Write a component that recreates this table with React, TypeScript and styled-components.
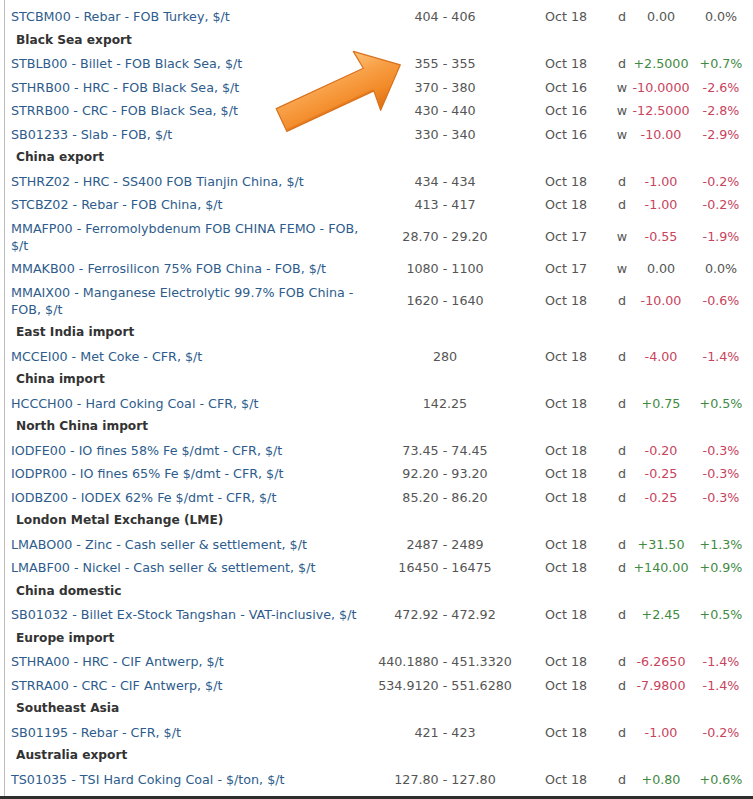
import styled, { createGlobalStyle } from "styled-components";

type Quote = {
    code: string;
    name: string;
    range: string;
    date: string;
    freq: string;
    change: string;
    pct: string;
};

type Section = { title?: string; quotes: Quote[] };

const q = (
    code: string,
    name: string,
    range: string,
    date: string,
    freq: string,
    change: string,
    pct: string
): Quote => ({ code, name, range, date, freq, change, pct });

const sections: Section[] = [
    {
        quotes: [q("STCBM00", "Rebar - FOB Turkey, $/t", "404 - 406", "Oct 18", "d", "0.00", "0.0%")],
    },
    {
        title: "Black Sea export",
        quotes: [
            q("STBLB00", "Billet - FOB Black Sea, $/t", "355 - 355", "Oct 18", "d", "+2.5000", "+0.7%"),
            q("STHRB00", "HRC - FOB Black Sea, $/t", "370 - 380", "Oct 16", "w", "-10.0000", "-2.6%"),
            q("STRRB00", "CRC - FOB Black Sea, $/t", "430 - 440", "Oct 16", "w", "-12.5000", "-2.8%"),
            q("SB01233", "Slab - FOB, $/t", "330 - 340", "Oct 16", "w", "-10.00", "-2.9%"),
        ],
    },
    {
        title: "China export",
        quotes: [
            q("STHRZ02", "HRC - SS400 FOB Tianjin China, $/t", "434 - 434", "Oct 18", "d", "-1.00", "-0.2%"),
            q("STCBZ02", "Rebar - FOB China, $/t", "413 - 417", "Oct 18", "d", "-1.00", "-0.2%"),
            q("MMAFP00", "Ferromolybdenum FOB CHINA FEMO - FOB, $/t", "28.70 - 29.20", "Oct 17", "w", "-0.55", "-1.9%"),
            q("MMAKB00", "Ferrosilicon 75% FOB China - FOB, $/t", "1080 - 1100", "Oct 17", "w", "0.00", "0.0%"),
            q("MMAIX00", "Manganese Electrolytic 99.7% FOB China - FOB, $/t", "1620 - 1640", "Oct 18", "d", "-10.00", "-0.6%"),
        ],
    },
    {
        title: "East India import",
        quotes: [q("MCCEI00", "Met Coke - CFR, $/t", "280", "Oct 18", "d", "-4.00", "-1.4%")],
    },
    {
        title: "China import",
        quotes: [q("HCCCH00", "Hard Coking Coal - CFR, $/t", "142.25", "Oct 18", "d", "+0.75", "+0.5%")],
    },
    {
        title: "North China import",
        quotes: [
            q("IODFE00", "IO fines 58% Fe $/dmt - CFR, $/t", "73.45 - 74.45", "Oct 18", "d", "-0.20", "-0.3%"),
            q("IODPR00", "IO fines 65% Fe $/dmt - CFR, $/t", "92.20 - 93.20", "Oct 18", "d", "-0.25", "-0.3%"),
            q("IODBZ00", "IODEX 62% Fe $/dmt - CFR, $/t", "85.20 - 86.20", "Oct 18", "d", "-0.25", "-0.3%"),
        ],
    },
    {
        title: "London Metal Exchange (LME)",
        quotes: [
            q("LMABO00", "Zinc - Cash seller & settlement, $/t", "2487 - 2489", "Oct 18", "d", "+31.50", "+1.3%"),
            q("LMABF00", "Nickel - Cash seller & settlement, $/t", "16450 - 16475", "Oct 18", "d", "+140.00", "+0.9%"),
        ],
    },
    {
        title: "China domestic",
        quotes: [q("SB01032", "Billet Ex-Stock Tangshan - VAT-inclusive, $/t", "472.92 - 472.92", "Oct 18", "d", "+2.45", "+0.5%")],
    },
    {
        title: "Europe import",
        quotes: [
            q("STHRA00", "HRC - CIF Antwerp, $/t", "440.1880 - 451.3320", "Oct 18", "d", "-6.2650", "-1.4%"),
            q("STRRA00", "CRC - CIF Antwerp, $/t", "534.9120 - 551.6280", "Oct 18", "d", "-7.9800", "-1.4%"),
        ],
    },
    {
        title: "Southeast Asia",
        quotes: [q("SB01195", "Rebar - CFR, $/t", "421 - 423", "Oct 18", "d", "-1.00", "-0.2%")],
    },
    {
        title: "Australia export",
        quotes: [q("TS01035", "TSI Hard Coking Coal - $/ton, $/t", "127.80 - 127.80", "Oct 18", "d", "+0.80", "+0.6%")],
    },
];

type Tone = "up" | "down" | "flat";

const toneOf = (value: string): Tone =>
    value.startsWith("+") ? "up" : value.startsWith("-") ? "down" : "flat";

const toneColors: Record<Tone, string> = {
    up: "#3f8a3f",
    down: "#c8435c",
    flat: "#555555",
};

const GlobalStyle = createGlobalStyle`
    html, body {
        margin: 0;
        padding: 0;
        background: #ffffff;
    }

    body {
        font-family: "DejaVu Sans", Verdana, sans-serif;
        font-size: 12.7px;
    }
`;

const Page = styled.div`
    position: relative;
    width: 753px;
    height: 799px;
    box-sizing: border-box;
    border-bottom: 3px solid #2e2e2e;
    overflow: hidden;
`;

const Panel = styled.div`
    height: 100%;
    margin-left: 4px;
    padding-top: 5px;
    box-sizing: border-box;
    border-left: 1px solid #bcbcbc;
`;

const Row = styled.div`
    display: grid;
    grid-template-columns: 380px 120px 103px 28px 50px 67px;
    align-items: center;
    padding: 3.25px 0;
    line-height: 17px;
`;

const GroupTitle = styled.div`
    padding: 3.25px 0 3.25px 11px;
    line-height: 17px;
    font-size: 12.2px;
    font-weight: bold;
    color: #333333;
`;

const NameCell = styled.div`
    padding: 0 17px 0 6px;
    color: #2d5c8c;
`;

const Cell = styled.div<{ $tone?: Tone; $padLeft?: number }>`
    display: flex;
    justify-content: center;
    white-space: nowrap;
    padding-left: ${(p) => p.$padLeft ?? 0}px;
    color: ${(p) => toneColors[p.$tone ?? "flat"]};
`;

const ArrowSvg = styled.svg`
    position: absolute;
    left: 266px;
    top: 38px;
    width: 146px;
    height: 110px;
    pointer-events: none;
`;

function Arrow() {
    return (
        <ArrowSvg viewBox="266 38 146 110">
            <defs>
                <linearGradient id="arrowFill" gradientUnits="userSpaceOnUse" x1="0" y1="-32" x2="0" y2="33">
                    <stop offset="0" stopColor="#fdc378" />
                    <stop offset="0.35" stopColor="#f8a047" />
                    <stop offset="0.7" stopColor="#f28a28" />
                    <stop offset="1" stopColor="#dd6c12" />
                </linearGradient>
            </defs>
            <g transform="translate(281.5 120) rotate(-24.9)">
                <polygon
                    points="0,-12.5 96,-12.5 94,-32 131,0 94,33 96,12.5 0,12.5"
                    fill="url(#arrowFill)"
                    stroke="#d8711c"
                    strokeWidth="1.2"
                    strokeLinejoin="round"
                />
                <polyline
                    points="1,11.5 96,11.5"
                    stroke="#e0751a"
                    strokeWidth="2"
                    fill="none"
                    opacity="0.6"
                />
            </g>
        </ArrowSvg>
    );
}

function QuoteRow({ quote }: { quote: Quote }) {
    return (
        <Row>
            <NameCell>
                {quote.code} - {quote.name}
            </NameCell>
            <Cell>{quote.range}</Cell>
            <Cell $padLeft={19}>{quote.date}</Cell>
            <Cell>{quote.freq}</Cell>
            <Cell $tone={toneOf(quote.change)}>{quote.change}</Cell>
            <Cell $tone={toneOf(quote.pct)} $padLeft={3}>
                {quote.pct}
            </Cell>
        </Row>
    );
}

export default function App() {
    return (
        <>
            <GlobalStyle />
            <Page>
                <Panel>
                    {sections.map((section, i) => (
                        <div key={i}>
                            {section.title && <GroupTitle>{section.title}</GroupTitle>}
                            {section.quotes.map((quote) => (
                                <QuoteRow key={quote.code} quote={quote} />
                            ))}
                        </div>
                    ))}
                </Panel>
                <Arrow />
            </Page>
        </>
    );
}
